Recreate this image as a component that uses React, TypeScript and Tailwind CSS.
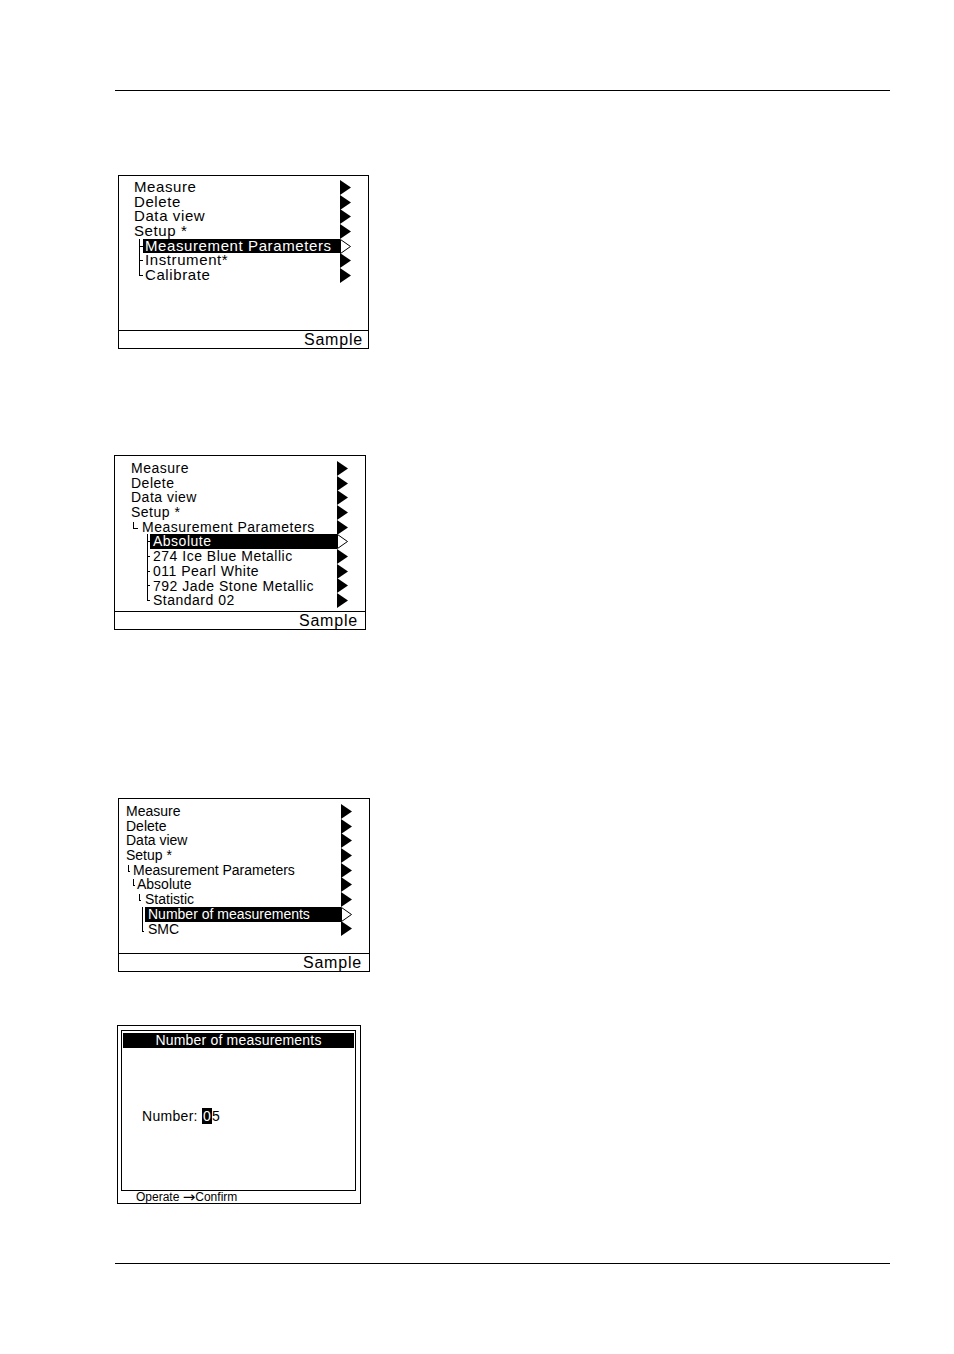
import type { ReactNode } from 'react';

type Row = {
  label: string;
  pre?: ReactNode;
  hl?: boolean;
  pad?: string;
};

function Arrow({ hl }: { hl?: boolean }) {
  return (
    <svg width="11" height="15" viewBox="0 0 11 15" className="shrink-0 self-center">
      {hl ? (
        <polygon points="0.5,0.5 10.5,7.5 0.5,14.5" fill="white" stroke="black" strokeWidth="1" />
      ) : (
        <polygon points="0,0 11,7.5 0,15" fill="black" />
      )}
    </svg>
  );
}

// ├ / └ connector spanning the full row height
function Tee({ last }: { last?: boolean }) {
  return (
    <div className="flex w-[4px] shrink-0 flex-col">
      <div className="flex-1 border-b border-l border-black" />
      <div className={last ? 'flex-1' : 'flex-1 border-l border-black'} />
    </div>
  );
}

function Tee3({ last }: { last?: boolean }) {
  return (
    <div className="flex w-[3px] shrink-0 flex-col">
      <div className="flex-1 border-b border-l border-black" />
      <div className={last ? 'flex-1' : 'flex-1 border-l border-black'} />
    </div>
  );
}

// small superscript └
function Elbow({ w, h }: { w: string; h: string }) {
  return <div className={`mt-[2px] shrink-0 self-start border-b border-l border-black ${w} ${h}`} />;
}

function Gap({ w }: { w: string }) {
  return <div className={`shrink-0 ${w}`} />;
}

function MenuScreen({
  rows,
  box,
  text,
  padLeft,
  samplePad,
}: {
  rows: Row[];
  box: string;
  text: string;
  padLeft: string;
  samplePad: string;
}) {
  return (
    <div className={`flex flex-col border border-black ${box}`}>
      <div className={`flex flex-1 flex-col pr-[17px] ${padLeft}`}>
        {rows.map((r) => (
          <div key={r.label} className="flex h-[14.7px] items-stretch">
            <div className="flex flex-1 items-stretch">
              {r.pre}
              <span
                className={`${text} whitespace-nowrap leading-[14.7px] ${r.pad ?? 'pl-[2px]'} ${
                  r.hl ? 'flex-1 bg-black text-white' : ''
                }`}
              >
                {r.label}
              </span>
            </div>
            <Arrow hl={r.hl} />
          </div>
        ))}
      </div>
      <div className={`flex h-[18px] items-center justify-end border-t border-black ${samplePad}`}>
        <span className="text-[16px] leading-[16px] tracking-[0.8px]">Sample</span>
      </div>
    </div>
  );
}

export default function App() {
  const screen1: Row[] = [
    { label: 'Measure', pad: 'pl-0' },
    { label: 'Delete', pad: 'pl-0' },
    { label: 'Data  view', pad: 'pl-0' },
    { label: 'Setup  *', pad: 'pl-0' },
    { label: 'Measurement Parameters', hl: true, pre: <><Gap w="w-[5px]" /><Tee /></> },
    { label: 'Instrument*', pre: <><Gap w="w-[5px]" /><Tee /></> },
    { label: 'Calibrate', pre: <><Gap w="w-[5px]" /><Tee last /></> },
  ];

  const screen2: Row[] = [
    { label: 'Measure', pad: 'pl-0' },
    { label: 'Delete', pad: 'pl-0' },
    { label: 'Data view', pad: 'pl-0' },
    { label: 'Setup *', pad: 'pl-0' },
    {
      label: 'Measurement Parameters',
      pad: 'pl-[4px]',
      pre: <><Gap w="w-[2px]" /><Elbow w="w-[5px]" h="h-[7px]" /></>,
    },
    { label: 'Absolute', hl: true, pad: 'pl-[3px]', pre: <><Gap w="w-[16px]" /><Tee3 /></> },
    { label: '274 Ice Blue Metallic', pad: 'pl-[3px]', pre: <><Gap w="w-[16px]" /><Tee3 /></> },
    { label: '011 Pearl White', pad: 'pl-[3px]', pre: <><Gap w="w-[16px]" /><Tee3 /></> },
    { label: '792 Jade Stone Metallic', pad: 'pl-[3px]', pre: <><Gap w="w-[16px]" /><Tee3 /></> },
    { label: 'Standard 02', pad: 'pl-[3px]', pre: <><Gap w="w-[16px]" /><Tee3 last /></> },
  ];

  const screen3: Row[] = [
    { label: 'Measure', pad: 'pl-0' },
    { label: 'Delete', pad: 'pl-0' },
    { label: 'Data view', pad: 'pl-0' },
    { label: 'Setup *', pad: 'pl-0' },
    {
      label: 'Measurement Parameters',
      pad: 'pl-[3px]',
      pre: <><Gap w="w-[2px]" /><Elbow w="w-[2px]" h="h-[7px]" /></>,
    },
    { label: 'Absolute', pad: 'pl-[2px]', pre: <><Gap w="w-[7px]" /><Elbow w="w-[2px]" h="h-[7px]" /></> },
    { label: 'Statistic', pad: 'pl-[4px]', pre: <><Gap w="w-[13px]" /><Elbow w="w-[2px]" h="h-[7px]" /></> },
    {
      label: 'Number of measurements',
      hl: true,
      pad: 'pl-[3px]',
      pre: <><Gap w="w-[16px]" /><div className="w-[3px] shrink-0 border-l border-black" /></>,
    },
    {
      label: 'SMC',
      pad: 'pl-[4px]',
      pre: <><Gap w="w-[16px]" /><div className="h-[10px] w-[2px] shrink-0 border-b border-l border-black" /></>,
    },
  ];

  return (
    <div className="flex min-h-[1354px] flex-col bg-white pb-[90px] text-black [font-family:'Liberation_Sans',Arial,sans-serif]">
      <div className="ml-[115px] mt-[90px] h-px w-[775px] bg-black" />

      <div className="ml-[118px] mt-[84px]">
        <MenuScreen
          rows={screen1}
          box="h-[174px] w-[251px] pt-[4px]"
          text="text-[15px] tracking-[0.6px]"
          padLeft="pl-[15px]"
          samplePad="pr-[5px]"
        />
      </div>

      <div className="ml-[114px] mt-[106px]">
        <MenuScreen
          rows={screen2}
          box="h-[175px] w-[252px] pt-[5px]"
          text="text-[14px] tracking-[0.5px]"
          padLeft="pl-[16px]"
          samplePad="pr-[7px]"
        />
      </div>

      <div className="ml-[118px] mt-[168px]">
        <MenuScreen
          rows={screen3}
          box="h-[174px] w-[252px] pt-[5px]"
          text="text-[14px]"
          padLeft="pl-[7px]"
          samplePad="pr-[7px]"
        />
      </div>

      <div className="ml-[117px] mt-[53px] flex h-[179px] w-[244px] flex-col border border-black">
        <div className="ml-[3px] mt-[4px] flex h-[161px] w-[235px] flex-col border border-black px-px pt-[2px]">
          <div className="flex h-[15px] items-center justify-center bg-black text-[14px] leading-[15px] tracking-[0.2px] text-white">
            Number of measurements
          </div>
          <div className="mt-[60px] pl-[19px] text-[14px] leading-[16px] tracking-[0.3px]">
            Number:{' '}
            <span className="bg-black px-[1px] text-white">0</span>5
          </div>
        </div>
        <div className="flex items-center pl-[18px] text-[12px] leading-[12px]">
          <span>Operate&nbsp;</span>
          <span className="text-[15px] leading-[12px] [font-family:'DejaVu_Sans',sans-serif]">→</span>
          <span>Confirm</span>
        </div>
      </div>

      <div className="ml-[115px] mt-[59px] h-px w-[775px] bg-black" />
    </div>
  );
}
